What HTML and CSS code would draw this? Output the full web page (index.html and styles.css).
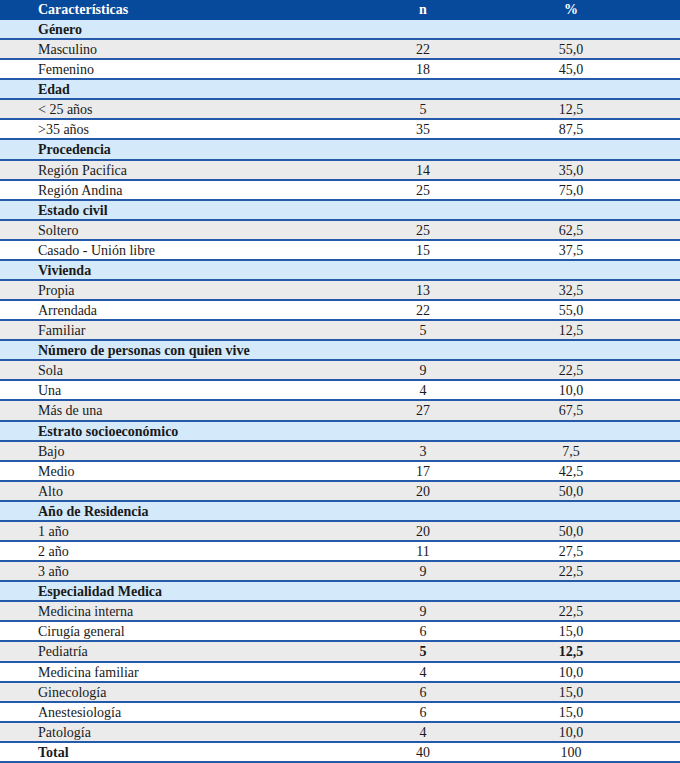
FILE: index.html
```html
<!DOCTYPE html>
<html lang="es">
<head>
<meta charset="utf-8">
<title>Características</title>
<link rel="stylesheet" href="styles.css">
</head>
<body>
<div class="table">
  <div class="row head"><div class="c1">Características</div><div class="c2">n</div><div class="c3">%</div><div></div></div>

  <div class="row cat"><div class="c1">Género</div><div class="c2"></div><div class="c3"></div><div></div></div>
  <div class="row grey"><div class="c1">Masculino</div><div class="c2">22</div><div class="c3">55,0</div><div></div></div>
  <div class="row white"><div class="c1">Femenino</div><div class="c2">18</div><div class="c3">45,0</div><div></div></div>

  <div class="row cat"><div class="c1">Edad</div><div class="c2"></div><div class="c3"></div><div></div></div>
  <div class="row grey"><div class="c1">&lt; 25 años</div><div class="c2">5</div><div class="c3">12,5</div><div></div></div>
  <div class="row white"><div class="c1">&gt;35 años</div><div class="c2">35</div><div class="c3">87,5</div><div></div></div>

  <div class="row cat"><div class="c1">Procedencia</div><div class="c2"></div><div class="c3"></div><div></div></div>
  <div class="row grey"><div class="c1">Región Pacifica</div><div class="c2">14</div><div class="c3">35,0</div><div></div></div>
  <div class="row white"><div class="c1">Región Andina</div><div class="c2">25</div><div class="c3">75,0</div><div></div></div>

  <div class="row cat"><div class="c1">Estado civil</div><div class="c2"></div><div class="c3"></div><div></div></div>
  <div class="row grey"><div class="c1">Soltero</div><div class="c2">25</div><div class="c3">62,5</div><div></div></div>
  <div class="row white"><div class="c1">Casado - Unión libre</div><div class="c2">15</div><div class="c3">37,5</div><div></div></div>

  <div class="row cat"><div class="c1">Vivienda</div><div class="c2"></div><div class="c3"></div><div></div></div>
  <div class="row grey"><div class="c1">Propia</div><div class="c2">13</div><div class="c3">32,5</div><div></div></div>
  <div class="row white"><div class="c1">Arrendada</div><div class="c2">22</div><div class="c3">55,0</div><div></div></div>
  <div class="row grey"><div class="c1">Familiar</div><div class="c2">5</div><div class="c3">12,5</div><div></div></div>

  <div class="row cat"><div class="c1">Número de personas con quien vive</div><div class="c2"></div><div class="c3"></div><div></div></div>
  <div class="row grey"><div class="c1">Sola</div><div class="c2">9</div><div class="c3">22,5</div><div></div></div>
  <div class="row white"><div class="c1">Una</div><div class="c2">4</div><div class="c3">10,0</div><div></div></div>
  <div class="row grey"><div class="c1">Más de una</div><div class="c2">27</div><div class="c3">67,5</div><div></div></div>

  <div class="row cat"><div class="c1">Estrato socioeconómico</div><div class="c2"></div><div class="c3"></div><div></div></div>
  <div class="row grey"><div class="c1">Bajo</div><div class="c2">3</div><div class="c3">7,5</div><div></div></div>
  <div class="row white"><div class="c1">Medio</div><div class="c2">17</div><div class="c3">42,5</div><div></div></div>
  <div class="row grey"><div class="c1">Alto</div><div class="c2">20</div><div class="c3">50,0</div><div></div></div>

  <div class="row cat"><div class="c1">Año de Residencia</div><div class="c2"></div><div class="c3"></div><div></div></div>
  <div class="row grey"><div class="c1">1 año</div><div class="c2">20</div><div class="c3">50,0</div><div></div></div>
  <div class="row white"><div class="c1">2 año</div><div class="c2">11</div><div class="c3">27,5</div><div></div></div>
  <div class="row grey"><div class="c1">3 año</div><div class="c2">9</div><div class="c3">22,5</div><div></div></div>

  <div class="row cat"><div class="c1">Especialidad Medica</div><div class="c2"></div><div class="c3"></div><div></div></div>
  <div class="row grey"><div class="c1">Medicina interna</div><div class="c2">9</div><div class="c3">22,5</div><div></div></div>
  <div class="row white"><div class="c1">Cirugía general</div><div class="c2">6</div><div class="c3">15,0</div><div></div></div>
  <div class="row grey"><div class="c1">Pediatría</div><div class="c2 b">5</div><div class="c3 b">12,5</div><div></div></div>
  <div class="row white"><div class="c1">Medicina familiar</div><div class="c2">4</div><div class="c3">10,0</div><div></div></div>
  <div class="row grey"><div class="c1">Ginecología</div><div class="c2">6</div><div class="c3">15,0</div><div></div></div>
  <div class="row white"><div class="c1">Anestesiología</div><div class="c2">6</div><div class="c3">15,0</div><div></div></div>
  <div class="row grey"><div class="c1">Patología</div><div class="c2">4</div><div class="c3">10,0</div><div></div></div>

  <div class="row white"><div class="c1 b">Total</div><div class="c2">40</div><div class="c3">100</div><div></div></div>
</div>
</body>
</html>
```

FILE: styles.css
```css
html, body {
  margin: 0;
  padding: 0;
  background: #ffffff;
}

body {
  font-family: "Liberation Serif", "Times New Roman", serif;
  font-size: 14px;
  color: #1a1a1a;
}

.table {
  width: 680px;
  display: flex;
  flex-direction: column;
}

.row {
  display: grid;
  grid-template-columns: 350px 146px 150px 1fr;
  height: 18.08px;
  line-height: 20px;
  border-bottom: 2px solid #245aa9;
}

.row > div {
  white-space: nowrap;
}

.c1 {
  padding-left: 38px;
}

.c2, .c3 {
  text-align: center;
}

.head {
  height: 20px;
  line-height: 19px;
  border-bottom: none;
  background: #07499b;
  color: #ffffff;
  font-weight: bold;
}

.cat {
  background: #d4e9f9;
  font-weight: bold;
}

.grey {
  background: #ebebeb;
}

.white {
  background: #ffffff;
}

.b {
  font-weight: bold;
}
```
